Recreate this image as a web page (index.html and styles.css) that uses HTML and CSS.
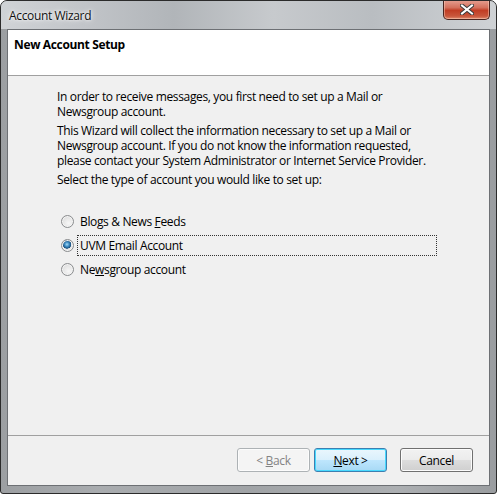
FILE: index.html
```html
<!DOCTYPE html>
<html lang="en">
<head>
    <meta charset="UTF-8">
    <meta name="viewport" content="width=device-width, initial-scale=1.0">
    <title>Account Wizard</title>
    <link rel="stylesheet" href="styles.css">
</head>
<body>
    <div class="window">
        <div class="titlebar">
            <span class="title">Account Wizard</span>
            <button class="close" aria-label="Close">
                <svg width="14" height="11" viewBox="0 0 14 11">
                    <path d="M2 1.5 L12 9.5 M12 1.5 L2 9.5" stroke="#3a3a3a" stroke-width="4" stroke-linecap="square"/>
                    <path d="M2 1.5 L12 9.5 M12 1.5 L2 9.5" stroke="#ffffff" stroke-width="2" stroke-linecap="square"/>
                </svg>
            </button>
        </div>

        <div class="client">
            <div class="page-header">New Account Setup</div>

            <div class="page-body">
                <p>In order to receive messages, you first need to set up a Mail or Newsgroup account.</p>
                <p>This Wizard will collect the information necessary to set up a Mail or Newsgroup account. If you do not know the information requested, please contact your System Administrator or Internet Service Provider.</p>
                <p>Select the type of account you would like to set up:</p>

                <div class="radio-group">
                    <label class="radio">
                        <input type="radio" name="acctyp" value="rss">
                        <span>Blogs &amp; News <u>F</u>eeds</span>
                    </label>
                    <label class="radio focused">
                        <input type="radio" name="acctyp" value="uvm" checked>
                        <span>UVM Email Account</span>
                    </label>
                    <label class="radio">
                        <input type="radio" name="acctyp" value="news">
                        <span>Ne<u>w</u>sgroup account</span>
                    </label>
                </div>
            </div>

            <div class="page-footer">
                <button class="btn" disabled>&lt; <u>B</u>ack</button>
                <button class="btn default"><u>N</u>ext &gt;</button>
                <button class="btn cancel">Cancel</button>
            </div>
        </div>
    </div>
</body>
</html>
```

FILE: styles.css
```css
html, body {
    margin: 0;
    padding: 0;
    background: #ffffff;
}
body {
    font-family: "Open Sans", "Noto Sans", sans-serif;
    font-size: 12px;
    letter-spacing: -0.35px;
    color: #000;
}
.window {
    width: 497px;
    height: 494px;
    box-sizing: border-box;
    border: 1px solid #2b2b2b;
    border-radius: 7px 7px 3px 3px;
    background: linear-gradient(to right, #9c9fa2, #a9acaf 20%, #a0a3a6 50%, #acafb2 80%, #9a9da0);
    display: flex;
    flex-direction: column;
    overflow: hidden;
}
.titlebar {
    height: 28px;
    display: flex;
    align-items: flex-start;
    background: linear-gradient(to right, #d0d3d6, #c3c6ca 15%, #b1b5b9 35%, #c7cacd 55%, #b9bdc1 75%, #cfd2d5);
}
.title {
    margin: 6px 0 0 8px;
    font-size: 12px;
    color: #111;
    text-shadow: 0 0 6px #fff, 0 0 3px #fff;
}
.close {
    margin: -1px 6px 0 auto;
    width: 47px;
    height: 20px;
    padding: 0;
    border: 1px solid #4a2520;
    border-top: none;
    border-radius: 0 0 5px 5px;
    background: linear-gradient(to bottom, #e6a193 0%, #d4715d 40%, #c13d24 55%, #c9573c 85%, #e08c70 100%);
    box-shadow: inset 0 0 0 1px rgba(255, 220, 200, 0.45);
    display: flex;
    align-items: center;
    justify-content: center;
}
.client {
    flex: 1;
    margin: 0 6px 7px 6px;
    border: 1px solid #6d7074;
    background: #f0f0f0;
    display: flex;
    flex-direction: column;
}
.page-header {
    height: 46px;
    box-sizing: border-box;
    padding: 6px 0 0 6px;
    background: #fff;
    border-bottom: 1px solid #a0a0a0;
    font-weight: bold;
}
.page-body {
    flex: 1;
    padding: 13px 0 0 49px;
    width: 380px;
}
.page-body p {
    margin: 0 0 4px;
    line-height: 15px;
}
.radio-group {
    margin-top: 22px;
    display: flex;
    flex-direction: column;
}
.radio {
    display: flex;
    align-items: center;
    height: 24px;
    margin-left: 2px;
}
.radio input {
    appearance: none;
    -webkit-appearance: none;
    width: 13px;
    height: 13px;
    margin: 0 3px 0 2px;
    border: 1px solid #8a8c8e;
    border-radius: 50%;
    box-sizing: border-box;
    background: radial-gradient(circle at 60% 65%, #f7f7f7 0%, #e3e3e3 60%, #cfcfcf 100%);
    box-shadow: inset 0 0 0 1px #f4f4f4;
}
.radio input:checked {
    background: radial-gradient(circle at 45% 40%, #a9dbf6 0%, #3d8cc4 25%, #1b4f7d 45%, #e6e6e6 50%, #dcdcdc 100%);
}
.radio span {
    padding: 1px 2px;
    border: 1px solid transparent;
}
.radio.focused span {
    flex: 1;
    border: 1px dotted #333;
}
.page-footer {
    height: 50px;
    border-top: 1px solid #a0a0a0;
    display: flex;
    justify-content: flex-end;
    align-items: flex-start;
    padding: 12px 16px 0 0;
    box-sizing: border-box;
}
.btn {
    width: 73px;
    height: 24px;
    margin-left: 4px;
    font-family: inherit;
    font-size: 12px;
    letter-spacing: -0.35px;
    color: #000;
    border: 1px solid #707070;
    border-radius: 3px;
    background: linear-gradient(to bottom, #f2f2f2 0%, #ebebeb 50%, #dddddd 51%, #cfcfcf 100%);
    box-shadow: inset 0 0 0 1px #fcfcfc;
    padding: 0;
}
.btn:disabled {
    color: #838383;
    border-color: #adb2b5;
    background: #f4f4f4;
}
.btn.default {
    border-color: #3c7fb1;
    background: linear-gradient(to bottom, #eaf6fd 0%, #d9f0fc 50%, #bee6fd 51%, #a7d9f5 100%);
    box-shadow: inset 0 0 0 1px #48d9fe;
}
.btn.cancel {
    margin-left: 13px;
}
```
